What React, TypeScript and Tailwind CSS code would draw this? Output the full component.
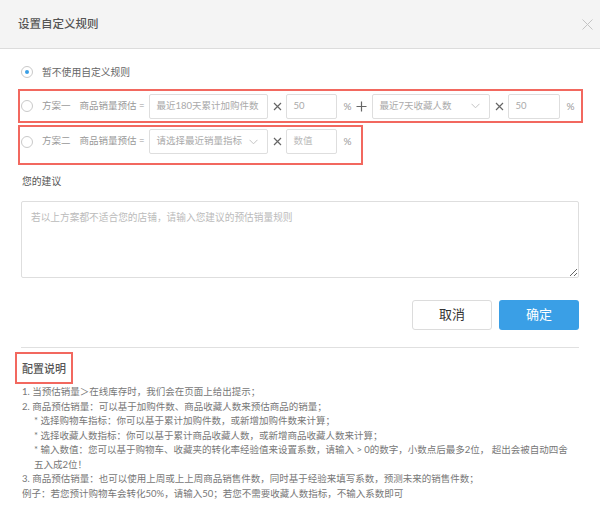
import React from "react";

const font = "font-['Lato','Noto_Sans_CJK_SC',sans-serif]";

const Times = () => (
  <svg width="9" height="9" viewBox="0 0 9 9" className="shrink-0">
    <path d="M1 1L8 8M8 1L1 8" stroke="#666" strokeWidth="1.2" />
  </svg>
);

const Plus = () => (
  <svg width="11" height="11" viewBox="0 0 11 11" className="shrink-0">
    <path d="M5.5 0.5V10.5M0.5 5.5H10.5" stroke="#666" strokeWidth="1.2" />
  </svg>
);

const Chevron = () => (
  <svg width="9" height="6" viewBox="0 0 9 6" className="shrink-0">
    <path d="M0.5 0.8L4.5 4.8L8.5 0.8" stroke="#c4c4c4" strokeWidth="1" fill="none" />
  </svg>
);

const Radio = ({ checked = false }: { checked?: boolean }) => (
  <span className="flex h-[12px] w-[12px] shrink-0 items-center justify-center rounded-full border border-[#c9c9c9] bg-white">
    {checked && <span className="h-[4px] w-[4px] rounded-full bg-[#3a9fe6]" />}
  </span>
);

const Box = ({ w, children, text = "text-[#aaa]" }: { w: string; children: React.ReactNode; text?: string }) => (
  <div className={`flex h-[25px] shrink-0 items-center whitespace-nowrap rounded-[2px] border border-[#dedede] px-[6px] text-[9.5px] ${w} ${text}`}>
    {children}
  </div>
);

const Select = ({ w, label }: { w: string; label: string }) => (
  <div className={`flex h-[25px] shrink-0 items-center justify-between whitespace-nowrap rounded-[2px] border border-[#dedede] pl-[6px] pr-[9px] text-[9.5px] text-[#aaa] ${w}`}>
    <span>{label}</span>
    <Chevron />
  </div>
);

const Pct = () => <span className="ml-[6px] text-[10px] text-[#999]">%</span>;

const Label = ({ name }: { name: string }) => (
  <>
    <span className="ml-[9px] whitespace-nowrap text-[9.5px] text-[#999]">{name}</span>
    <span className="ml-[9px] whitespace-nowrap text-[9.5px] text-[#999]">商品销量预估 =</span>
  </>
);

export default function App() {
  return (
    <div className={`w-[600px] h-[519px] overflow-hidden bg-white ${font}`}>
      {/* header */}
      <div className="flex h-[49px] items-center justify-between border-b border-[#dcdcdc] bg-[#f4f4f4] pl-[18px] pr-[7px]">
        <span className="text-[11.5px] font-medium text-[#555]">设置自定义规则</span>
        <svg width="11" height="11" viewBox="0 0 11 11">
          <path d="M0.5 0.5L10.5 10.5M10.5 0.5L0.5 10.5" stroke="#c4c4c4" strokeWidth="1" />
        </svg>
      </div>

      <div className="pl-[18px] pr-[17px]">
        {/* no custom rule */}
        <div className="mt-[16px] flex h-[14px] items-center pl-[3px]">
          <Radio checked />
          <span className="ml-[9px] text-[9.8px] text-[#666]">暂不使用自定义规则</span>
        </div>

        {/* plan 1 */}
        <div className="mt-[10px] flex h-[34px] items-center border-2 border-[#f2685f] pl-[1px]">
          <Radio />
          <Label name="方案一" />
          <div className="ml-[5px]">
            <Box w="w-[119px]">最近180天累计加购件数</Box>
          </div>
          <span className="ml-[5px] mr-[4px]"><Times /></span>
          <Box w="w-[51px]">50</Box>
          <Pct />
          <span className="ml-[5px] mr-[5px]"><Plus /></span>
          <Select w="w-[118px]" label="最近7天收藏人数" />
          <span className="ml-[5px] mr-[4px]"><Times /></span>
          <Box w="w-[52px]">50</Box>
          <Pct />
        </div>

        {/* plan 2 */}
        <div className="mt-[2px] h-[40px] w-[345px] border-2 border-[#f2685f] pl-[1px] pt-[2px]">
          <div className="flex h-[25px] items-center">
            <Radio />
            <Label name="方案二" />
            <div className="ml-[5px]">
              <Select w="w-[119px]" label="请选择最近销量指标" />
            </div>
            <span className="ml-[5px] mr-[4px]"><Times /></span>
            <Box w="w-[51px]" text="text-[#bbb]">数值</Box>
            <Pct />
          </div>
        </div>

        {/* suggestion */}
        <div className="ml-[4px] mt-[9px] text-[9.8px] leading-[14px] text-[#555]">您的建议</div>
        <textarea
          className="ml-[3px] mt-[13px] block h-[77px] w-[558px] rounded-[2px] border border-[#dedede] px-[9px] py-[8px] text-[9.7px] text-[#555] outline-none placeholder:text-[#bbb]"
          placeholder="若以上方案都不适合您的店铺，请输入您建议的预估销量规则"
        />

        <div className="mr-[4px] mt-[22px] flex justify-end gap-[7px]">
          <button className="h-[30px] w-[80px] rounded-[3px] border border-[#dcdcdc] bg-white text-[13px] text-[#333]">取消</button>
          <button className="h-[30px] w-[80px] rounded-[3px] bg-[#3a9fe6] text-[13px] text-white">确定</button>
        </div>

        <div className="ml-[3px] mt-[17px] h-px w-[558px] bg-[#e0e0e0]" />

        {/* notes */}
        <div className="-ml-[3px] mt-[4px] flex h-[32px] w-[58px] items-center border-2 border-[#f2685f] pl-[5px] pt-[2px]">
          <span className="whitespace-nowrap text-[11px] font-medium text-[#555]">配置说明</span>
        </div>
        <div className="ml-[4px] mt-[1px] whitespace-nowrap text-[9.5px] leading-[14.5px] text-[#777]">
          <div>1. 当预估销量＞在线库存时，我们会在页面上给出提示；</div>
          <div>2. 商品预估销量：可以基于加购件数、商品收藏人数来预估商品的销量；</div>
          <div className="pl-[12px]">* 选择购物车指标：你可以基于累计加购件数，或新增加购件数来计算；</div>
          <div className="pl-[12px]">* 选择收藏人数指标：你可以基于累计商品收藏人数，或新增商品收藏人数来计算；</div>
          <div className="pl-[12px]">* 输入数值：您可以基于购物车、收藏夹的转化率经验值来设置系数，请输入 &gt; 0的数字，小数点后最多2位， 超出会被自动四舍</div>
          <div className="pl-[12px]">五入成2位！</div>
          <div>3. 商品预估销量：也可以使用上周或上上周商品销售件数，同时基于经验来填写系数，预测未来的销售件数；</div>
          <div>例子：若您预计购物车会转化50%，请输入50；若您不需要收藏人数指标，不输入系数即可</div>
        </div>
      </div>
    </div>
  );
}
